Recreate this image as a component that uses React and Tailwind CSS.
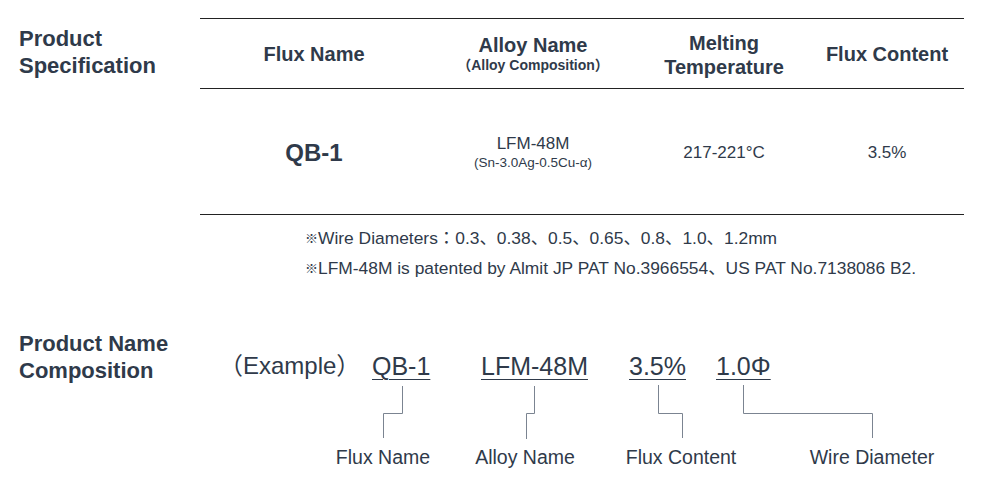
export default function App() {
  const font = "font-['Liberation_Sans','Noto_Sans_CJK_JP',sans-serif]";
  return (
    <div className={`w-[986px] h-[486px] bg-white text-[#2f3a4a] overflow-hidden ${font}`}>
      {/* Section 1 */}
      <div className="flex">
        <div className="w-[200px] pl-[19px] pt-[25px] font-bold text-[22px] leading-[27px]">
          <div>Product</div>
          <div>Specification</div>
        </div>
        <div className="w-[764px]">
          <div className="mt-[18px] border-t border-b border-[#222]">
            <div className="grid grid-cols-[228px_210px_172px_154px] h-[70px] border-b border-[#222] items-center text-center font-bold text-[20px]">
              <div className="leading-[24px]">Flux Name</div>
              <div className="flex flex-col items-center pt-[1px]">
                <div className="leading-[22px]">Alloy Name</div>
                <div className="text-[14px] leading-[18px]">（Alloy Composition）</div>
              </div>
              <div className="leading-[24px] pt-[3px]">
                <div>Melting</div>
                <div>Temperature</div>
              </div>
              <div className="leading-[24px]">Flux Content</div>
            </div>
            <div className="grid grid-cols-[228px_210px_172px_154px] h-[125px] items-center text-center">
              <div className="font-bold text-[24px] leading-[30px] pt-[2px]">QB-1</div>
              <div className="flex flex-col items-center pt-[2px]">
                <div className="text-[17px] leading-[20px]">LFM-48M</div>
                <div className="text-[13.5px] leading-[17px]">(Sn-3.0Ag-0.5Cu-α)</div>
              </div>
              <div className="text-[17px] leading-[24px] pt-[2px]">217-221°C</div>
              <div className="text-[17px] leading-[24px] pt-[2px]">3.5%</div>
            </div>
          </div>
          <div className="pl-[105px] pt-[8px] text-[17.4px] leading-[30px] whitespace-nowrap">
            <div className="h-[30px] flex items-center"><span className="text-[13px] leading-none">※</span><span>Wire Diameters：0.3、0.38、0.5、0.65、0.8、1.0、1.2mm</span></div>
            <div className="h-[30px] flex items-center"><span className="text-[13px] leading-none">※</span><span>LFM-48M is patented by Almit JP PAT No.3966554、US PAT No.7138086 B2.</span></div>
          </div>
        </div>
      </div>

      {/* Section 2 */}
      <div className="flex mt-[47px]">
        <div className="w-[200px] pl-[19px] font-bold text-[22px] leading-[27px]">
          <div>Product Name</div>
          <div>Composition</div>
        </div>
        <div className="w-[786px]">
          <div className="mt-[21px] flex pl-[19px] text-[25px] leading-[30px] whitespace-nowrap">
            <div className="w-[153px] text-[24px]">（Example）</div>
            <div className="w-[109px]"><span className="underline decoration-1 underline-offset-[4px]">QB-1</span></div>
            <div className="w-[148px]"><span className="underline decoration-1 underline-offset-[4px]">LFM-48M</span></div>
            <div className="w-[87px]"><span className="underline decoration-1 underline-offset-[4px]">3.5%</span></div>
            <div><span className="underline decoration-1 underline-offset-[4px]">1.0Φ</span></div>
          </div>
          <svg width="786" height="54" className="mt-[4px] block" fill="none" stroke="#7b8491" strokeWidth="1">
            <path d="M202.5 1 V28.5 H183.5 V53" />
            <path d="M334.5 1 V28.5 H326.5 V54" />
            <path d="M458.5 0 V28.5 H482.5 V53" />
            <path d="M543.5 0 V28.5 H672.5 V53" />
          </svg>
          <div className="mt-[6px] flex text-[19.5px] leading-[24px] whitespace-nowrap">
            <div className="ml-[123px] w-[120px] text-center">Flux Name</div>
            <div className="ml-[22px] w-[120px] text-center">Alloy Name</div>
            <div className="ml-[36px] w-[120px] text-center">Flux Content</div>
            <div className="ml-[61px] w-[140px] text-center">Wire Diameter</div>
          </div>
        </div>
      </div>
    </div>
  );
}
